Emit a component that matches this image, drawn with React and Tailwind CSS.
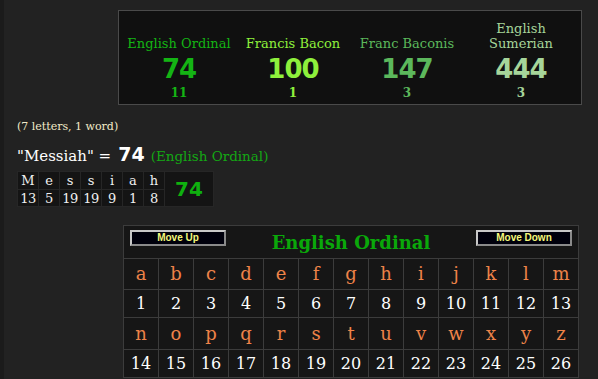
import React from "react"

const serif = { fontFamily: '"DejaVu Serif", "Liberation Serif", serif' }
const sans = { fontFamily: '"DejaVu Sans", "Liberation Sans", sans-serif' }

const ciphers = [
  { label: ["English Ordinal"], value: 74, count: 11, color: "text-[#14b414]" },
  { label: ["Francis Bacon"], value: 100, count: 1, color: "text-[#8ef03c]" },
  { label: ["Franc Baconis"], value: 147, count: 3, color: "text-[#5cb85c]" },
  { label: ["English", "Sumerian"], value: 444, count: 3, color: "text-[#a6d59a]" },
]

const word = [
  ["M", 13],
  ["e", 5],
  ["s", 19],
  ["s", 19],
  ["i", 9],
  ["a", 1],
  ["h", 8],
]

const alphabet = "abcdefghijklmnopqrstuvwxyz".split("")

function MoveButton({ children }) {
  return (
    <button
      className="h-[16px] w-[96px] bg-[#00000c] border-2 border-t-[#c8c8c8] border-l-[#c8c8c8] border-r-[#8a8a8a] border-b-[#8a8a8a] text-[10px] font-bold leading-[12px] text-[#f4f87a]"
      style={{ fontFamily: '"Liberation Sans", Arial, sans-serif' }}
    >
      {children}
    </button>
  )
}

export default function App() {
  return (
    <div className="flex min-h-[379px] w-[598px] bg-[#222222]">
      <div className="w-[4px] bg-[#1b1b1b]" />

      <div className="flex flex-col items-start">
        {/* Cipher summary */}
        <div className="ml-[114px] mt-[10px] h-[95px] w-[464px] border border-[#4a4a4a] bg-[#101010] px-[3px]">
          <div className="grid h-full grid-cols-4">
            {ciphers.map((c) => (
              <div key={c.value} className={`flex flex-col items-center justify-end pb-[4px] ${c.color}`}>
                {c.label.map((l) => (
                  <div key={l} className="text-[13px] leading-[15px]" style={serif}>
                    {l}
                  </div>
                ))}
                <div className="mt-[3px] text-[26px] font-bold leading-[30px] tracking-[-1px]" style={sans}>
                  {c.value}
                </div>
                <div className="mt-[2px] text-[12px] font-bold leading-[14px]" style={serif}>
                  {c.count}
                </div>
              </div>
            ))}
          </div>
        </div>

        <div className="ml-[13px] mt-[15px] text-[11px] leading-[14px] text-[#f3ebc9]" style={serif}>
          (7 letters, 1 word)
        </div>

        <div className="ml-[13px] mt-[8px] flex items-baseline leading-[24px]" style={serif}>
          <span className="text-[15px] text-white">"Messiah" =</span>
          <span className="ml-[7px] text-[19px] font-bold text-white" style={sans}>
            74
          </span>
          <span className="ml-[6px] text-[13.5px] text-[#14a814]">(English Ordinal)</span>
        </div>

        {/* Word breakdown */}
        <table className="ml-[13px] mt-[3px] border-collapse bg-[#141414]" style={serif}>
          <tbody>
            <tr>
              {word.map(([l], i) => (
                <td
                  key={i}
                  className="h-[18px] w-[21px] min-w-[21px] border border-[#262626] p-0 text-center text-[13px] leading-[16px] text-[#f0f0f0]"
                >
                  {l}
                </td>
              ))}
              <td
                rowSpan={2}
                className="w-[49px] min-w-[49px] border border-[#262626] p-0 text-center text-[20px] font-bold text-[#0fb00f]"
                style={sans}
              >
                74
              </td>
            </tr>
            <tr>
              {word.map(([, n], i) => (
                <td
                  key={i}
                  className="h-[17px] border border-[#262626] p-0 text-center text-[13px] leading-[15px] tracking-[-0.5px] text-[#f0f0f0]"
                >
                  {n}
                </td>
              ))}
            </tr>
          </tbody>
        </table>

        {/* Cipher chart */}
        <table className="ml-[119px] mt-[18px] border-collapse bg-[#161616]" style={serif}>
          <tbody>
            <tr>
              <td colSpan={13} className="h-[33px] border border-[#3c3c3c] p-0">
                <div className="flex h-full items-start justify-between px-[6px] pt-[4px]">
                  <MoveButton>Move Up</MoveButton>
                  <div className="mt-[2px] text-[18px] font-bold leading-[22px] text-[#0aa80a]">English Ordinal</div>
                  <MoveButton>Move Down</MoveButton>
                </div>
              </td>
            </tr>
            {[0, 1].map((r) => (
              <React.Fragment key={r}>
                <tr>
                  {alphabet.slice(r * 13, r * 13 + 13).map((l) => (
                    <td
                      key={l}
                      className={`${r === 0 ? "h-[31px]" : "h-[32px]"} w-[35px] min-w-[35px] border border-[#3c3c3c] p-0 text-center text-[18px] leading-[20px] text-[#ee8349]`}
                    >
                      {l}
                    </td>
                  ))}
                </tr>
                <tr>
                  {alphabet.slice(r * 13, r * 13 + 13).map((l, i) => (
                    <td
                      key={l}
                      className="h-[28px] border border-[#3c3c3c] p-0 text-center text-[16px] leading-[18px] text-white"
                    >
                      {r * 13 + i + 1}
                    </td>
                  ))}
                </tr>
              </React.Fragment>
            ))}
          </tbody>
        </table>
      </div>
    </div>
  )
}
